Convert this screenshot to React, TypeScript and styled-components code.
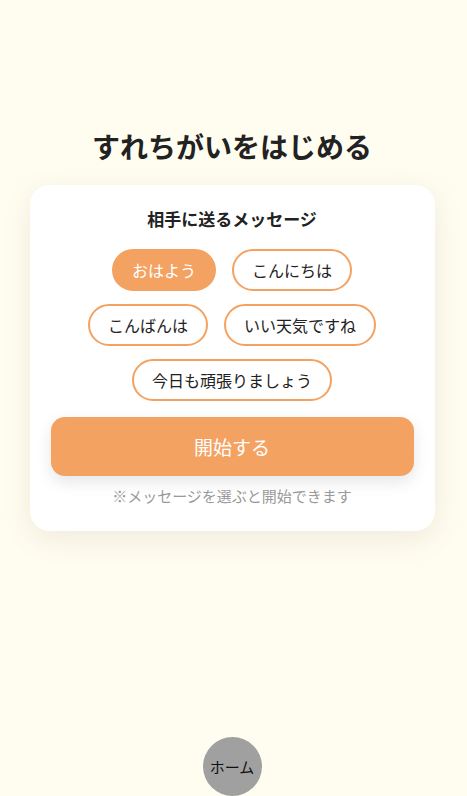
import React, { useState } from "react";
import styled, { createGlobalStyle } from "styled-components";

const GlobalStyle = createGlobalStyle`
  html, body { margin: 0; padding: 0; }
  body {
    background: #fffdf0;
    font-family: "Noto Sans CJK JP", "Noto Sans", sans-serif;
    color: #222;
  }
  * { box-sizing: border-box; }
`;

const Page = styled.div`
  min-height: 100vh;
  display: flex;
  flex-direction: column;
  align-items: center;
  padding: 126px 3px 0 0;
`;

const Title = styled.h1`
  margin: 0 0 19px;
  font-size: 28px;
  line-height: 40px;
  font-weight: 700;
  color: #222;
`;

const Card = styled.section`
  width: 405px;
  background: #fff;
  border-radius: 20px;
  padding: 22px 21px 24px;
  box-shadow: 0 8px 28px rgba(120, 110, 80, 0.12);
  display: flex;
  flex-direction: column;
  align-items: center;
`;

const Subtitle = styled.h2`
  margin: 0 0 18px;
  font-size: 17px;
  line-height: 24px;
  font-weight: 700;
  color: #222;
`;

const Chips = styled.div`
  display: flex;
  flex-wrap: wrap;
  justify-content: center;
  column-gap: 16px;
  row-gap: 13px;
  padding: 0 14px;
  margin-bottom: 16px;
`;

const Chip = styled.button<{ $selected: boolean }>`
  font-family: inherit;
  font-size: 16px;
  line-height: 22px;
  padding: 8px 18px;
  border-radius: 999px;
  border: 2px solid #f4a261;
  background: ${(p) => (p.$selected ? "#f4a261" : "#fff")};
  color: ${(p) => (p.$selected ? "#fff" : "#222")};
  cursor: pointer;
`;

const StartButton = styled.button`
  width: 100%;
  height: 59px;
  border: none;
  border-radius: 14px;
  background: #f4a261;
  color: #fff;
  font-family: inherit;
  font-size: 19px;
  font-weight: 400;
  box-shadow: 0 6px 16px rgba(0, 0, 0, 0.1);
  cursor: pointer;
`;

const Note = styled.p`
  margin: 9px 0 0;
  font-size: 15px;
  line-height: 22px;
  color: #999;
`;

const Spacer = styled.div`
  flex: 1;
`;

const HomeButton = styled.button`
  width: 59px;
  height: 59px;
  border-radius: 50%;
  border: none;
  background: #a0a0a0;
  color: #111;
  font-family: "Noto Sans CJK JP", sans-serif;
  font-size: 15px;
  padding: 0;
  cursor: pointer;
`;

const messages = [
  "おはよう",
  "こんにちは",
  "こんばんは",
  "いい天気ですね",
  "今日も頑張りましょう",
];

export default function App() {
  const [selected, setSelected] = useState(0);
  return (
    <>
      <GlobalStyle />
      <Page>
        <Title>すれちがいをはじめる</Title>
        <Card>
          <Subtitle>相手に送るメッセージ</Subtitle>
          <Chips>
            {messages.map((m, i) => (
              <Chip key={m} $selected={selected === i} onClick={() => setSelected(i)}>
                {m}
              </Chip>
            ))}
          </Chips>
          <StartButton>開始する</StartButton>
          <Note>※メッセージを選ぶと開始できます</Note>
        </Card>
        <Spacer />
        <HomeButton>ホーム</HomeButton>
      </Page>
    </>
  );
}
